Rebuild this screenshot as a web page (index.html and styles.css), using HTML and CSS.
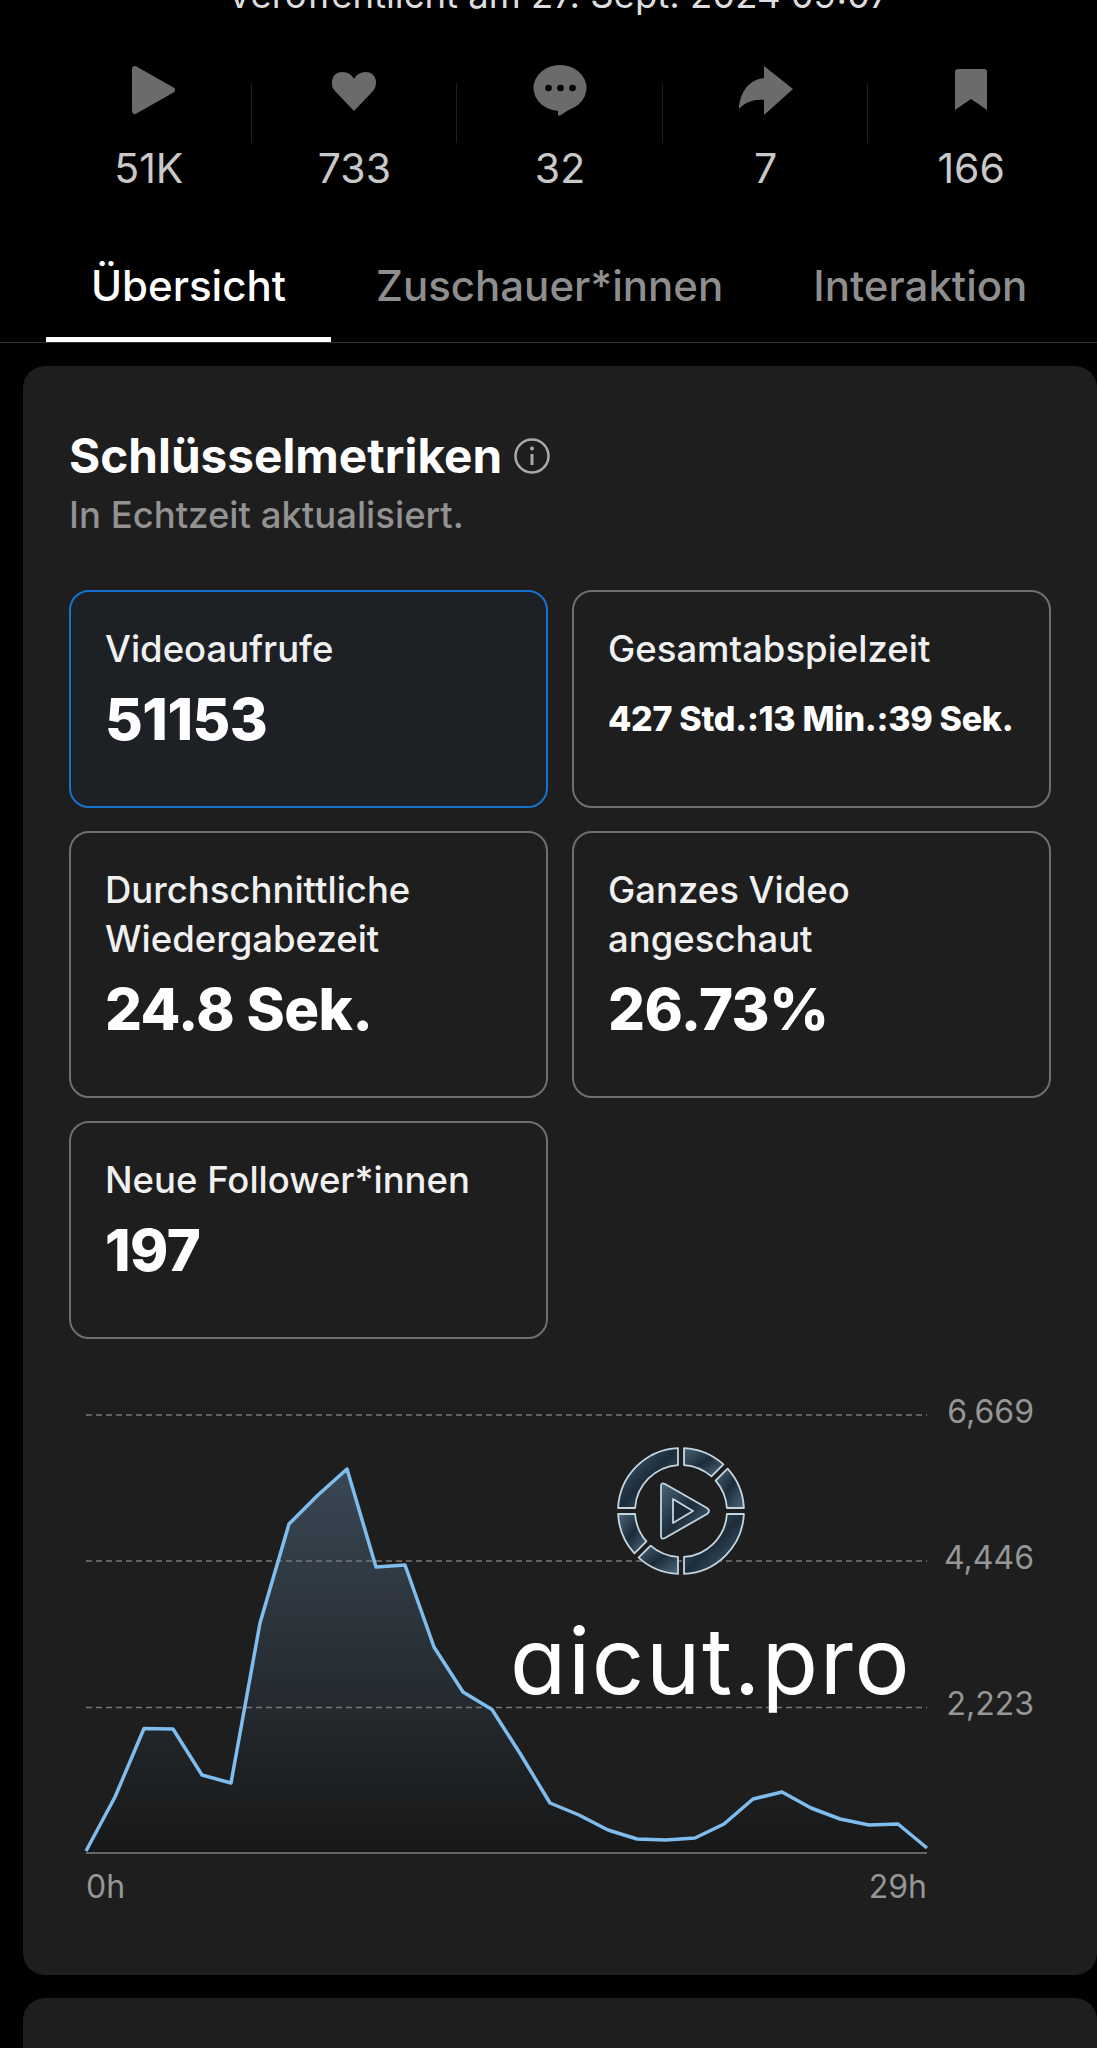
FILE: index.html
```html
<!DOCTYPE html>
<html lang="de">
<head>
  <meta charset="UTF-8" />
  <meta name="viewport" content="width=device-width, initial-scale=1.0"/>
  <title>Video Analytics</title>
  <link rel="stylesheet" href="styles.css">
</head>
<body>

<p class="published">Veröffentlicht am 27. Sept. 2024 09:07</p>

<!-- Stats -->
<div class="stats">
  <div class="stat">
    <svg class="stat-icon" viewBox="0 0 60 54"><polygon points="16,5 53,26 16,47" stroke="#6b6b6b" stroke-width="6" stroke-linejoin="round"/></svg>
    <span class="stat-num">51K</span>
  </div>
  <div class="stat">
    <svg class="stat-icon" viewBox="0 0 60 54"><path d="M30 47 L11 27 C5 20 8 8 18 8 C24 8 28 11 30 15 C32 11 36 8 42 8 C52 8 55 20 49 27 Z"/></svg>
    <span class="stat-num">733</span>
  </div>
  <div class="stat">
    <svg class="stat-icon" viewBox="0 0 60 54">
      <ellipse cx="30" cy="24" rx="26.5" ry="23"/>
      <path d="M28 42 V50 Q28 53 31 51 L46 41 Z"/>
      <circle class="dot" cx="18.5" cy="24" r="3.3"/>
      <circle class="dot" cx="30.5" cy="24" r="3.3"/>
      <circle class="dot" cx="42.5" cy="24" r="3.3"/>
    </svg>
    <span class="stat-num">32</span>
  </div>
  <div class="stat">
    <svg class="stat-icon" viewBox="0 0 60 54"><path d="M28 2 L57 25 L28 51 V36 C18 35 10 38 4 44 C2 46 3 41 4 37 C7 24 16 15 28 14 Z"/></svg>
    <span class="stat-num">7</span>
  </div>
  <div class="stat">
    <svg class="stat-icon" viewBox="0 0 60 54"><path d="M14 8 Q14 5 17 5 H43 Q46 5 46 8 V46 L30 35 L14 46 Z"/></svg>
    <span class="stat-num">166</span>
  </div>
</div>

<!-- Tabs -->
<div class="tabs">
  <div class="tab active">Übersicht</div>
  <div class="tab">Zuschauer*innen</div>
  <div class="tab">Interaktion</div>
</div>

<!-- Key metrics -->
<section class="card">
  <h2>Schlüsselmetriken
    <svg class="info" viewBox="0 0 38 38">
      <circle cx="19" cy="19" r="16.5"/>
      <path d="M19 17 V28"/>
      <circle class="info-dot" cx="19" cy="11.5" r="2"/>
    </svg>
  </h2>
  <p class="sub">In Echtzeit aktualisiert.</p>

  <div class="tiles">
    <div class="tile selected">
      <div class="label">Videoaufrufe</div>
      <div class="value">51153</div>
    </div>
    <div class="tile">
      <div class="label">Gesamtabspielzeit</div>
      <div class="value small">427 Std.:13 Min.:39 Sek.</div>
    </div>
    <div class="tile">
      <div class="label">Durchschnittliche<br>Wiedergabezeit</div>
      <div class="value">24.8 Sek.</div>
    </div>
    <div class="tile">
      <div class="label">Ganzes Video<br>angeschaut</div>
      <div class="value">26.73%</div>
    </div>
    <div class="tile">
      <div class="label">Neue Follower*innen</div>
      <div class="value">197</div>
    </div>
  </div>

  <svg class="chart" viewBox="69 1390 982 530">
    <defs>
      <linearGradient id="area" x1="0" y1="0" x2="0" y2="1">
        <stop offset="0" stop-color="#394754"/>
        <stop offset="1" stop-color="#171717"/>
      </linearGradient>
    </defs>
    <polygon fill="url(#area)" points="86,1853 86,1851 115,1797 144,1728.5 173,1729 202,1775 231,1783 260,1623 289,1524 318,1495 347,1469 376,1567 405,1565 434,1647 463,1692 492,1709.5 521,1755 550,1803 579,1815 608,1830 637,1839 666,1840 695,1838 724,1824 753,1799 782,1792 811,1808 840,1819 869,1825 898,1824 927,1848 927,1853"/>
    <line class="grid" x1="86" y1="1415" x2="927" y2="1415"/>
    <line class="grid" x1="86" y1="1561" x2="927" y2="1561"/>
    <line class="grid" x1="86" y1="1707.5" x2="927" y2="1707.5"/>
    <line class="axis" x1="86" y1="1853" x2="927" y2="1853"/>
    <polyline class="line" points="86,1851 115,1797 144,1728.5 173,1729 202,1775 231,1783 260,1623 289,1524 318,1495 347,1469 376,1567 405,1565 434,1647 463,1692 492,1709.5 521,1755 550,1803 579,1815 608,1830 637,1839 666,1840 695,1838 724,1824 753,1799 782,1792 811,1808 840,1819 869,1825 898,1824 927,1848"/>
    <text class="tick" x="1034" y="1423" text-anchor="end">6,669</text>
    <text class="tick" x="1034" y="1569" text-anchor="end">4,446</text>
    <text class="tick" x="1034" y="1715" text-anchor="end">2,223</text>
    <text class="tick" x="86" y="1898">0h</text>
    <text class="tick" x="927" y="1898" text-anchor="end">29h</text>
  </svg>

  <!-- watermark -->
  <div class="watermark">
    <svg class="wm-logo" viewBox="-66 -66 132 132">
      <defs>
        <linearGradient id="glass" x1="0" y1="0" x2="1" y2="1">
          <stop offset="0" stop-color="#4b6578"/>
          <stop offset="0.5" stop-color="#1c2c3a"/>
          <stop offset="1" stop-color="#50697c"/>
        </linearGradient>
      </defs>
      <g fill="url(#glass)" stroke="#c3d5df" stroke-width="1.8" stroke-linejoin="round">
        <path d="M3 -62.9 A63 63 0 0 1 42.4 -46.6 L30.4 -34.6 A46 46 0 0 0 3 -45.9 Z"/>
        <path d="M46.6 -42.4 A63 63 0 0 1 62.9 -3 L45.9 -3 A46 46 0 0 0 34.6 -30.4 Z"/>
        <path d="M62.9 3 A63 63 0 0 1 3 62.9 L3 45.9 A46 46 0 0 0 45.9 3 Z"/>
        <path d="M-3 62.9 A63 63 0 0 1 -42.4 46.6 L-30.4 34.6 A46 46 0 0 0 -3 45.9 Z"/>
        <path d="M-46.6 42.4 A63 63 0 0 1 -62.9 3 L-45.9 3 A46 46 0 0 0 -34.6 30.4 Z"/>
        <path d="M-62.9 -3 A63 63 0 0 1 -3 -62.9 L-3 -45.9 A46 46 0 0 0 -45.9 -3 Z"/>
        <path d="M-20 -25 Q-20 -29 -16 -27 L26 -3 Q30 0 26 3 L-16 27 Q-20 29 -20 25 Z"/>
        <path d="M-8 -12 L12 0 L-8 12 Z" fill="#1c2a36"/>
      </g>
    </svg>
    <div class="wm-text">aicut.pro</div>
  </div>
</section>

<section class="card next"></section>

</body>
</html>
```

FILE: styles.css
```css
body {
  font-family: Inter, "Noto Sans", sans-serif;
  background: #000;
  color: #fff;
  margin: 0;
  width: 1097px;
  height: 2048px;
  overflow: hidden;
}
.published {
  margin: -25px 0 0;
  padding-left: 20px;
  text-align: center;
  font-size: 36.5px;
  line-height: 40px;
  color: #ddd;
}

/* stats */
.stats {
  display: grid;
  grid-template-columns: repeat(5, 1fr);
  margin: 49px 23px 0 46px;
}
.stat {
  display: flex;
  flex-direction: column;
  align-items: center;
  background: linear-gradient(#1f1f1f, #1f1f1f) right 19px / 1px 60px no-repeat;
}
.stat:last-child {
  background: none;
}
.stat-icon {
  width: 60px;
  height: 54px;
  fill: #6b6b6b;
}
.stat-icon .dot {
  fill: #000;
}
.stat-num {
  margin-top: 27px;
  font-size: 41px;
  line-height: 46px;
  color: #c8c8c8;
}

/* tabs */
.tabs {
  display: flex;
  margin-top: 70px;
  padding-left: 46px;
  border-bottom: 1px solid #333;
}
.tab {
  padding: 0 45px;
  height: 81px;
  font-size: 42px;
  font-weight: 500;
  line-height: 50px;
  color: #8e8e8e;
}
.tab.active {
  color: #fff;
  border-bottom: 5px solid #fff;
  height: 76px;
  margin-bottom: -1px;
}

/* card */
.card {
  position: relative;
  box-sizing: border-box;
  margin: 23px 0 0 23px;
  height: 1609px;
  padding: 62px 46px 0;
  background: #1e1e1e;
  border-radius: 22px;
}
.card.next {
  height: 100px;
}
h2 {
  display: flex;
  align-items: center;
  gap: 11px;
  margin: 0;
  font-size: 47.7px;
  font-weight: 700;
  line-height: 56px;
}
.info {
  width: 38px;
  height: 38px;
}
.info circle {
  fill: none;
  stroke: #aaa;
  stroke-width: 2.5;
}
.info path {
  stroke: #aaa;
  stroke-width: 3;
}
.info .info-dot {
  fill: #aaa;
  stroke: none;
}
.sub {
  margin: 10px 0 0;
  font-size: 36.5px;
  font-weight: 500;
  line-height: 42px;
  color: #929292;
}

/* tiles */
.tiles {
  display: grid;
  grid-template-columns: 479px 479px;
  gap: 23px 24px;
  margin-top: 54px;
}
.tile {
  box-sizing: border-box;
  padding: 33px 34px 52px;
  border: 2px solid #6f6f6f;
  border-radius: 20px;
}
.tile.selected {
  background: #1d2126;
  border-color: #1673cc;
}
.label {
  font-size: 36.5px;
  font-weight: 500;
  line-height: 49px;
  color: #f0f0f0;
}
.value {
  margin-top: 10px;
  font-size: 58px;
  font-weight: 800;
  line-height: 70px;
  letter-spacing: -0.5px;
  white-space: nowrap;
}
.value.small {
  font-size: 34px;
  letter-spacing: -0.3px;
}

/* chart */
.chart {
  display: block;
  width: 982px;
  height: 530px;
  margin-top: 51px;
}
.grid {
  stroke: #777;
  stroke-width: 1.5;
  stroke-dasharray: 6 4;
}
.axis {
  stroke: #666;
  stroke-width: 2;
}
.line {
  fill: none;
  stroke: #7fbdef;
  stroke-width: 3.5;
  stroke-linejoin: round;
}
.tick {
  font-size: 32px;
  fill: #969696;
}

/* watermark */
.watermark {
  position: absolute;
  left: 487px;
  top: 1079px;
}
.wm-logo {
  display: block;
  width: 132px;
  height: 132px;
  margin-left: 105px;
}
.wm-text {
  margin-top: 29px;
  font-size: 92px;
  line-height: 110px;
  letter-spacing: 1.6px;
  font-feature-settings: "cv11";
}
```
